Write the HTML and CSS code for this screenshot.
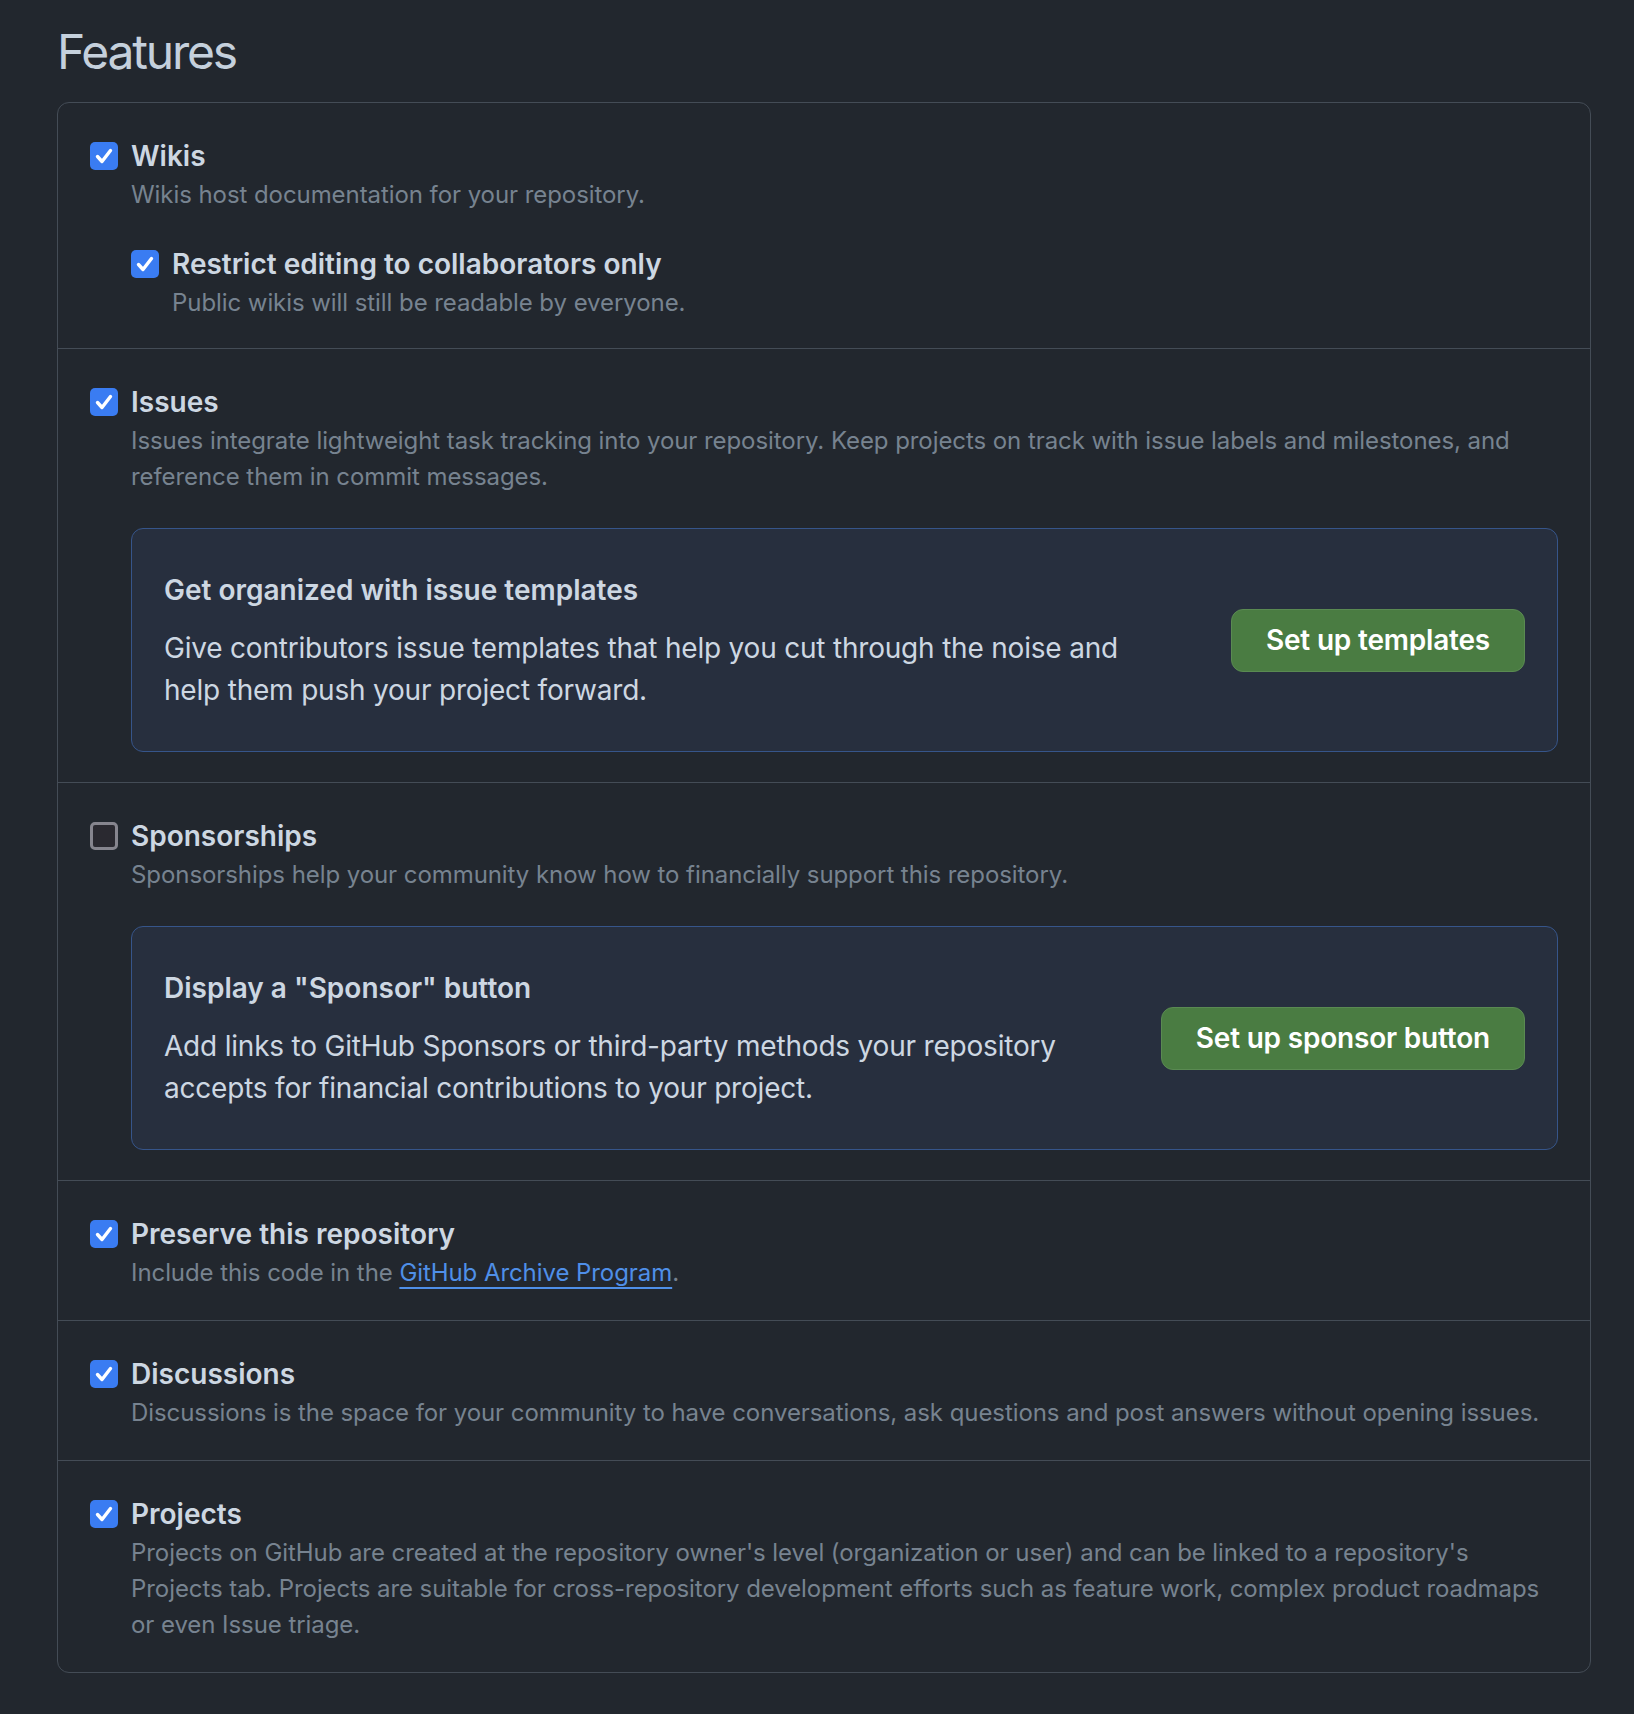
FILE: index.html
```html
<!DOCTYPE html>
<html lang="en">
<head>
<meta charset="utf-8">
<title>Features</title>
<link rel="stylesheet" href="styles.css">
</head>
<body>
<main class="page">
  <h2 class="title">Features</h2>
  <div class="box">
    <section class="row row-first">
      <div class="check-line">
        <span class="cb cb-on"><svg viewBox="0 0 28 28" width="28" height="28"><path d="M7.5 14.5 L12 19.5 L20.5 8.5" fill="none" stroke="#fff" stroke-width="3.4" stroke-linecap="round" stroke-linejoin="round"/></svg></span>
        <span class="label">Wikis</span>
      </div>
      <p class="note">Wikis host documentation for your repository.</p>
      <div class="nested">
        <div class="check-line">
          <span class="cb cb-on"><svg viewBox="0 0 28 28" width="28" height="28"><path d="M7.5 14.5 L12 19.5 L20.5 8.5" fill="none" stroke="#fff" stroke-width="3.4" stroke-linecap="round" stroke-linejoin="round"/></svg></span>
          <span class="label">Restrict editing to collaborators only</span>
        </div>
        <p class="note">Public wikis will still be readable by everyone.</p>
      </div>
    </section>

    <section class="row">
      <div class="check-line">
        <span class="cb cb-on"><svg viewBox="0 0 28 28" width="28" height="28"><path d="M7.5 14.5 L12 19.5 L20.5 8.5" fill="none" stroke="#fff" stroke-width="3.4" stroke-linecap="round" stroke-linejoin="round"/></svg></span>
        <span class="label">Issues</span>
      </div>
      <p class="note">Issues integrate lightweight task tracking into your repository. Keep projects on track with issue labels and milestones, and reference them in commit messages.</p>
      <div class="callout">
        <div class="callout-text">
          <h3 class="callout-title">Get organized with issue templates</h3>
          <p class="callout-body">Give contributors issue templates that help you cut through the noise and help them push your project forward.</p>
        </div>
        <button class="btn" type="button">Set up templates</button>
      </div>
    </section>

    <section class="row">
      <div class="check-line">
        <span class="cb cb-off"></span>
        <span class="label">Sponsorships</span>
      </div>
      <p class="note">Sponsorships help your community know how to financially support this repository.</p>
      <div class="callout">
        <div class="callout-text">
          <h3 class="callout-title">Display a "Sponsor" button</h3>
          <p class="callout-body">Add links to GitHub Sponsors or third-party methods your repository accepts for financial contributions to your project.</p>
        </div>
        <button class="btn" type="button">Set up sponsor button</button>
      </div>
    </section>

    <section class="row">
      <div class="check-line">
        <span class="cb cb-on"><svg viewBox="0 0 28 28" width="28" height="28"><path d="M7.5 14.5 L12 19.5 L20.5 8.5" fill="none" stroke="#fff" stroke-width="3.4" stroke-linecap="round" stroke-linejoin="round"/></svg></span>
        <span class="label">Preserve this repository</span>
      </div>
      <p class="note">Include this code in the <a class="link" href="#">GitHub Archive Program</a>.</p>
    </section>

    <section class="row">
      <div class="check-line">
        <span class="cb cb-on"><svg viewBox="0 0 28 28" width="28" height="28"><path d="M7.5 14.5 L12 19.5 L20.5 8.5" fill="none" stroke="#fff" stroke-width="3.4" stroke-linecap="round" stroke-linejoin="round"/></svg></span>
        <span class="label">Discussions</span>
      </div>
      <p class="note">Discussions is the space for your community to have conversations, ask questions and post answers without opening issues.</p>
    </section>

    <section class="row">
      <div class="check-line">
        <span class="cb cb-on"><svg viewBox="0 0 28 28" width="28" height="28"><path d="M7.5 14.5 L12 19.5 L20.5 8.5" fill="none" stroke="#fff" stroke-width="3.4" stroke-linecap="round" stroke-linejoin="round"/></svg></span>
        <span class="label">Projects</span>
      </div>
      <p class="note">Projects on GitHub are created at the repository owner's level (organization or user) and can be linked to a repository's Projects tab. Projects are suitable for cross-repository development efforts such as feature work, complex product roadmaps or even Issue triage.</p>
    </section>
  </div>
</main>
</body>
</html>
```

FILE: styles.css
```css
* { box-sizing: border-box; }

html, body {
  margin: 0;
  background: #22272e;
}

body {
  font-family: Inter, "Noto Sans", "Liberation Sans", sans-serif;
  color: #c5d0dc;
  min-height: 1714px;
}

.page {
  padding: 22px 43px 40px 57px;
}

.title {
  margin: 0 0 20px;
  font-size: 48px;
  line-height: 60px;
  font-weight: 400;
  letter-spacing: -2.2px;
  color: #c5d0dc;
}

.box {
  border: 1px solid #444c56;
  border-radius: 12px;
}

.row {
  padding: 32px 32px 29px;
  border-top: 1px solid #444c56;
}

.row-first {
  border-top: 0;
  padding-bottom: 27px;
}

.check-line {
  display: flex;
  align-items: center;
  gap: 13px;
  height: 42px;
}

.cb {
  flex: none;
  width: 28px;
  height: 28px;
  border-radius: 5px;
  display: block;
}

.cb svg { display: block; }

.cb-on {
  background: #3a7cf2;
}

.cb-off {
  background: #2a2930;
  border: 3px solid #86858e;
}

.label {
  font-size: 28px;
  line-height: 42px;
  font-weight: 600;
  color: #cdd7e2;
}

.note {
  margin: 0 0 0 41px;
  font-size: 24px;
  line-height: 36px;
  letter-spacing: -0.07px;
  color: #778390;
}

.nested {
  margin: 30px 0 0 41px;
}

.nested .note {
  margin-left: 41px;
}

.link {
  color: #4f8fe8;
  text-decoration: underline;
  text-decoration-thickness: 2px;
  text-underline-offset: 6px;
}

.callout {
  margin: 33px 0 1px 41px;
  display: flex;
  align-items: center;
  gap: 64px;
  padding: 40px 32px;
  background: #272f3e;
  border: 1px solid #36558a;
  border-radius: 12px;
}

.callout-text {
  flex: 1 1 auto;
  min-width: 0;
}

.callout-title {
  margin: 0 0 16px;
  font-size: 28px;
  line-height: 42px;
  font-weight: 600;
  color: #cdd7e2;
}

.callout-body {
  margin: 0;
  font-size: 28px;
  line-height: 42px;
  letter-spacing: -0.2px;
  color: #cdd7e2;
}

.btn {
  flex: none;
  height: 63px;
  padding: 0 34px;
  font-family: inherit;
  font-size: 28px;
  font-weight: 600;
  letter-spacing: -0.2px;
  color: #ffffff;
  background: #4a7c42;
  border: 1px solid #5a8a52;
  border-radius: 12px;
}
```
